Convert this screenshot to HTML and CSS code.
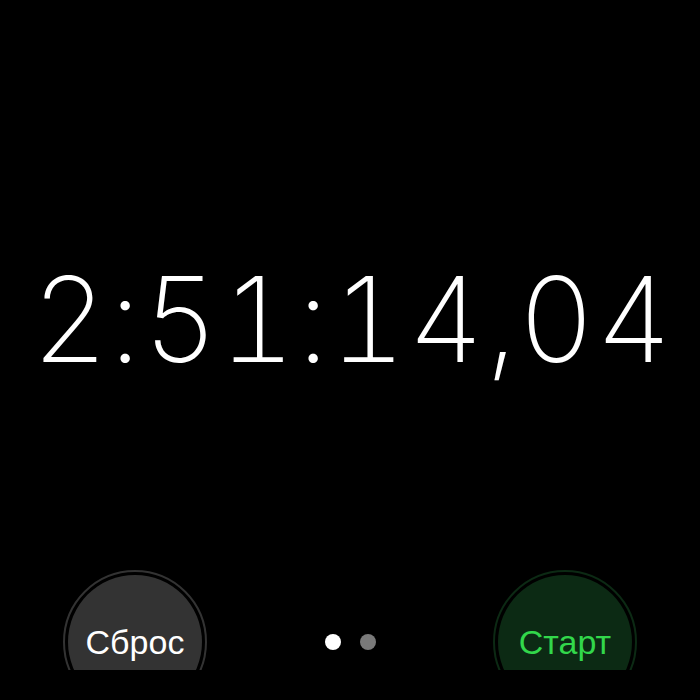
FILE: index.html
```html
<!DOCTYPE html>
<html lang="ru">
<head>
<meta charset="utf-8">
<link rel="stylesheet" href="styles.css">
</head>
<body>
<div class="screen">
  <section class="display">
    <div class="time">2:51:14,04</div>
  </section>
  <section class="controls">
    <button class="btn btn-reset"><span class="btn-face">Сброс</span></button>
    <div class="pager">
      <span class="dot dot-active"></span>
      <span class="dot"></span>
    </div>
    <button class="btn btn-start"><span class="btn-face">Старт</span></button>
  </section>
</div>
</body>
</html>
```
FILE: styles.css
```css
html, body {
  margin: 0;
  padding: 0;
  background: #000;
}
.screen {
  width: 700px;
  height: 670px;
  overflow: hidden;
  display: flex;
  flex-direction: column;
  background: #000;
}
.display {
  flex: none;
  height: 570px;
  display: flex;
  align-items: center;
  justify-content: center;
  padding-top: 68px;
  padding-left: 5px;
  box-sizing: border-box;
}
.time {
  font-family: "Inter", sans-serif;
  font-weight: 200;
  font-size: 118px;
  line-height: 1;
  color: #fff;
  white-space: nowrap;
  font-variant-numeric: tabular-nums;
  letter-spacing: 1.3px;
}
.controls {
  flex: none;
  display: flex;
  align-items: flex-start;
  justify-content: space-between;
  padding: 0 63px;
}
.btn {
  width: 144px;
  height: 144px;
  flex: none;
  border-radius: 50%;
  border: 2px solid #333;
  padding: 3px;
  box-sizing: border-box;
  background: #000;
  display: flex;
  margin: 0;
}
.btn-face {
  flex: 1;
  border-radius: 50%;
  display: flex;
  align-items: center;
  justify-content: center;
  font-family: "Liberation Sans", Arial, sans-serif;
  font-size: 34px;
}
.btn-reset .btn-face {
  background: #333;
  color: #fff;
}
.btn-start {
  border-color: #0c2a14;
}
.btn-start .btn-face {
  background: #0c2a14;
  color: #32d74b;
}
.pager {
  display: flex;
  gap: 19px;
  margin-top: 64px;
}
.dot {
  width: 16px;
  height: 16px;
  border-radius: 50%;
  background: #7a7a7a;
}
.dot-active {
  background: #fff;
}
```
